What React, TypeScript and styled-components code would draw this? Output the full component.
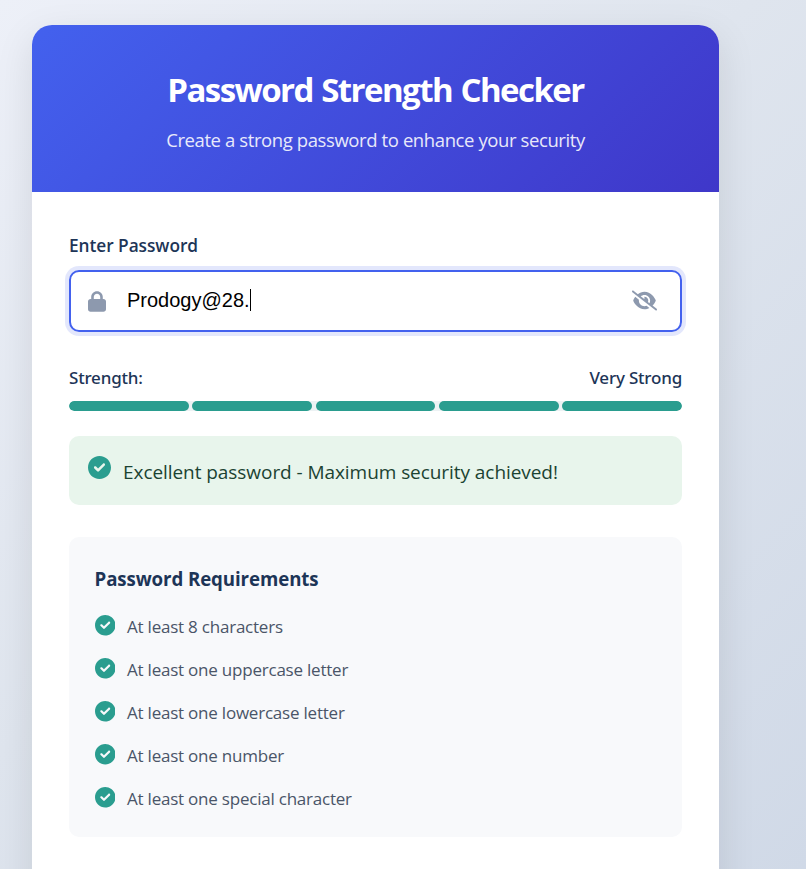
import React from "react";
import styled, { createGlobalStyle } from "styled-components";
import { FaEyeSlash, FaLock } from "react-icons/fa6";

const GlobalStyle = createGlobalStyle`
  * { box-sizing: border-box; margin: 0; padding: 0; }
  body { font-family: "Open Sans", sans-serif; overflow: hidden; }
`;

const Page = styled.main`
  height: 869px;
  padding: 25px 87px 0 32px;
  overflow: hidden;
  background: linear-gradient(135deg, #edf0f8 0%, #dfe5ee 45%, #d0d9e7 100%);
`;

const Card = styled.section`
  height: 920px;
  border-radius: 20px;
  overflow: hidden;
  background: #fff;
  box-shadow: 0 12px 38px rgba(0, 0, 0, 0.1);
`;

const Header = styled.header`
  height: 167px;
  padding-top: 42px;
  text-align: center;
  color: #fff;
  background: linear-gradient(135deg, #4361ee, #3f37c9);
`;

const Title = styled.h1`
  font-size: 33px;
  font-weight: 700;
  line-height: 46px;
  letter-spacing: -1.55px;
  word-spacing: 1.3px;
`;

const Subtitle = styled.p`
  margin-top: 13px;
  font-size: 18.5px;
  line-height: 28px;
  letter-spacing: -0.4px;
  opacity: 0.88;
`;

const Content = styled.div`
  padding: 40px 37px 0;
`;

const Label = styled.label`
  display: block;
  font-size: 17.3px;
  font-weight: 600;
  line-height: 28px;
  letter-spacing: -0.05px;
  color: #1d3557;
`;

const Field = styled.div`
  display: flex;
  align-items: center;
  height: 62px;
  margin-top: 10px;
  padding: 0 23px 2px 17px;
  border: 2px solid #4361ee;
  border-radius: 10px;
  color: #8d99ae;
  box-shadow: 0 0 0 4px rgba(67, 97, 238, 0.15);
`;

const LockIcon = styled(FaLock)`
  width: 18px;
  height: 21px;
  margin-top: 3px;
`;

const Password = styled.span`
  margin-left: 21px;
  font: 20px/24px "Liberation Sans", Arial, sans-serif;
  color: #000;
`;

const Caret = styled.span`
  width: 1px;
  height: 22px;
  background: #000;
`;

const HideIcon = styled(FaEyeSlash)`
  width: 25px;
  height: 21px;
  margin-left: auto;
`;

const StrengthRow = styled.div`
  display: flex;
  justify-content: space-between;
  margin-top: 32px;
  font-family: "Noto Sans", sans-serif;
  font-size: 17px;
  font-weight: 500;
  line-height: 28px;
  letter-spacing: -0.2px;
  color: #1d3557;
`;

const Meter = styled.div`
  display: grid;
  grid-template-columns: repeat(5, 1fr);
  gap: 3.75px;
  height: 10px;
  margin-top: 9px;
  border-radius: 5px;
  overflow: hidden;
  background: #edf2f4;
`;

const Segment = styled.span`
  border-radius: 5px;
  background: #2a9d8f;
`;

const Message = styled.div`
  display: flex;
  height: 69px;
  margin-top: 25px;
  padding: 20px 19px 0;
  border-radius: 10px;
  font-size: 19px;
  line-height: 33px;
  letter-spacing: -0.06px;
  color: #1b4332;
  background: #e8f5ec;
`;

const CheckSvg = styled.svg<{ $size: number }>`
  flex: none;
  width: ${(p) => p.$size}px;
  height: ${(p) => p.$size}px;
  margin-right: 12px;
  fill: #2a9d8f;
`;

const Requirements = styled.section`
  height: 300px;
  margin-top: 32px;
  padding: 26px 25.5px;
  border-radius: 10px;
  background: #f8f9fb;
`;

const RequirementsTitle = styled.h2`
  font-size: 18.7px;
  font-weight: 700;
  line-height: 32px;
  letter-spacing: -0.1px;
  color: #1d3557;
`;

const List = styled.ul`
  display: grid;
  grid-auto-rows: 43px;
  margin-top: 20px;
  list-style: none;
`;

const Item = styled.li`
  display: flex;
  font-size: 17px;
  line-height: 24px;
  letter-spacing: -0.22px;
  color: #4a5568;
`;

const requirements = [
  "At least 8 characters",
  "At least one uppercase letter",
  "At least one lowercase letter",
  "At least one number",
  "At least one special character",
];

function CheckIcon({ size }: { size: number }) {
  return (
    <CheckSvg $size={size} viewBox="0 0 512 512" aria-hidden="true">
      <path d="M0 256C0 114.6 114.6 0 256 0C397.4 0 512 114.6 512 256C512 397.4 397.4 512 256 512C114.6 512 0 397.4 0 256zM371.8 211.8C382.7 200.9 382.7 183.1 371.8 172.2C360.9 161.3 343.1 161.3 332.2 172.2L224 280.4L179.8 236.2C168.9 225.3 151.1 225.3 140.2 236.2C129.3 247.1 129.3 264.9 140.2 275.8L204.2 339.8C215.1 350.7 232.9 350.7 243.8 339.8L371.8 211.8z" />
    </CheckSvg>
  );
}

export default function App() {
  return (
    <>
      <GlobalStyle />
      <Page>
        <Card>
          <Header>
            <Title>Password Strength Checker</Title>
            <Subtitle>Create a strong password to enhance your security</Subtitle>
          </Header>
          <Content>
            <Label>Enter Password</Label>
            <Field>
              <LockIcon />
              <Password>Prodogy@28.</Password>
              <Caret />
              <HideIcon />
            </Field>
            <StrengthRow>
              <span>Strength:</span>
              <span>Very Strong</span>
            </StrengthRow>
            <Meter>
              {[1, 2, 3, 4, 5].map((level) => (
                <Segment key={level} />
              ))}
            </Meter>
            <Message>
              <CheckIcon size={23} />
              <span>Excellent password - Maximum security achieved!</span>
            </Message>
            <Requirements>
              <RequirementsTitle>Password Requirements</RequirementsTitle>
              <List>
                {requirements.map((text) => (
                  <Item key={text}>
                    <CheckIcon size={20.5} />
                    <span>{text}</span>
                  </Item>
                ))}
              </List>
            </Requirements>
          </Content>
        </Card>
      </Page>
    </>
  );
}
